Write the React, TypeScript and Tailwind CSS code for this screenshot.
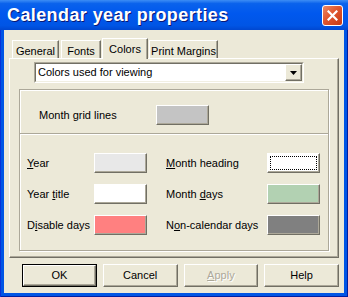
import React from 'react';

const font = { fontFamily: '"Liberation Sans", Arial, sans-serif' };

const raised =
  'border border-t-white border-l-white border-r-[#716F64] border-b-[#716F64] shadow-[inset_-1px_-1px_0_#ACA899]';

function U({ children }: { children: React.ReactNode }) {
  return <span className="underline underline-offset-[1px]">{children}</span>;
}

function Swatch({ color, focus = false }: { color: string; focus?: boolean }) {
  return (
    <div className={`w-[53px] h-[20px] p-[2px] ${raised} ${color}`}>
      {focus && <div className="w-full h-full border border-dotted border-black" />}
    </div>
  );
}

function Tab({ label, active = false, w }: { label: string; active?: boolean; w: string }) {
  if (active) {
    return (
      <div
        className={`${w} h-[21px] -mx-[1px] relative z-10 -mb-[1px] bg-[#ECE9D8] border border-b-0 border-t-white border-l-white border-r-[#716F64] shadow-[inset_-1px_0_0_#ACA899] flex justify-center pt-[2px] text-[11px] text-black`}
      >
        {label}
      </div>
    );
  }
  return (
    <div
      className={`${w} h-[18px] bg-[#ECE9D8] border border-b-0 border-t-white border-l-white border-r-[#716F64] shadow-[inset_-1px_0_0_#ACA899] flex justify-center pt-[2px] text-[11px] text-black`}
    >
      {label}
    </div>
  );
}

function DlgButton({ children, primary = false, disabled = false }: { children: React.ReactNode; primary?: boolean; disabled?: boolean }) {
  return (
    <div className={`w-[75px] h-[23px] ${primary ? 'border border-black' : ''}`}>
      <div
        className={`w-full h-full ${raised} bg-[#ECE9D8] flex items-center justify-center text-[11px] ${
          disabled ? 'text-[#ACA899] [text-shadow:1px_1px_0_#fff]' : 'text-black'
        }`}
      >
        {children}
      </div>
    </div>
  );
}

export default function App() {
  return (
    <div
      className="w-[348px] h-[297px] flex flex-col bg-[#0055E5] shadow-[inset_1px_0_0_#0831D9,inset_-1px_0_0_#001EA0,inset_0_-1px_0_#001EA0]"
      style={font}
    >
      {/* title bar */}
      <div className="h-[30px] shrink-0 flex items-center justify-between pl-[7px] pr-[5px] bg-[linear-gradient(to_bottom,#3D8DF5_0%,#0A62EC_12%,#0058EE_45%,#0055E5_85%,#0047D0_100%)]">
        <span className="text-white font-bold text-[18px] tracking-[0.4px] [text-shadow:1px_1px_0_#0A1874]">
          Calendar year properties
        </span>
        <div className="w-[21px] h-[21px] rounded-[3px] border border-white bg-[linear-gradient(135deg,#EB8A66_0%,#E0562F_45%,#C63A14_100%)] flex items-center justify-center">
          <svg width="11" height="11" viewBox="0 0 11 11">
            <path d="M1.5 1.5 L9.5 9.5 M9.5 1.5 L1.5 9.5" stroke="white" strokeWidth="2.2" strokeLinecap="square" />
          </svg>
        </div>
      </div>

      {/* client */}
      <div className="flex-1 mx-[4px] mb-[4px] bg-[#ECE9D8] px-[5px] pt-[7px] flex flex-col">
        <div className="h-[21px] flex items-end pl-[3px] gap-[2px]">
          <Tab label="General" w="w-[47px]" />
          <Tab label="Fonts" w="w-[40px]" />
          <Tab label="Colors" w="w-[46px]" active />
          <Tab label="Print Margins" w="w-[69px]" />
        </div>

        {/* tab panel */}
        <div className="h-[200px] shrink-0 border border-t-white border-l-white border-r-[#716F64] border-b-[#716F64] shadow-[inset_-1px_-1px_0_#ACA899] flex flex-col">
          <div className="pl-[24px] pt-[3px]">
            <div className="w-[270px] h-[21px] border border-t-[#ACA899] border-l-[#ACA899] border-r-white border-b-white">
              <div className="w-full h-full border border-t-[#716F64] border-l-[#716F64] border-r-[#F1EFE2] border-b-[#F1EFE2] bg-white flex items-center">
                <span className="flex-1 pl-[2px] text-[11px] text-black">Colors used for viewing</span>
                <div className={`w-[17px] h-[17px] ${raised} bg-[#ECE9D8] flex items-center justify-center`}>
                  <svg width="7" height="4" viewBox="0 0 7 4">
                    <path d="M0 0 H7 L3.5 4 Z" fill="black" />
                  </svg>
                </div>
              </div>
            </div>
          </div>

          {/* group box */}
          <div className="ml-[9px] mt-[6px] w-[310px] h-[162px] border border-[#ACA899] shadow-[inset_1px_1px_0_#fff,1px_1px_0_#fff] flex flex-col">
            <div className="h-[43px] flex items-start pl-[19px] pt-[15px] text-[11px] text-black">
              <span className="w-[117px] leading-[20px]">
                Month <U>g</U>rid lines
              </span>
              <Swatch color="bg-[#C4C4C4]" />
            </div>
            <div className="h-[2px] border-t border-[#ACA899] shadow-[inset_0_1px_0_#fff]" />
            <div className="flex flex-col gap-[11px] pt-[18px] pl-[7px] text-[11px] text-black">
              <div className="flex items-center h-[20px]">
                <span className="w-[67px]"><U>Y</U>ear</span>
                <Swatch color="bg-[#E8E8E8]" />
                <span className="w-[120px] pl-[19px]"><U>M</U>onth heading</span>
                <Swatch color="bg-white" focus />
              </div>
              <div className="flex items-center h-[20px]">
                <span className="w-[67px]">Year <U>t</U>itle</span>
                <Swatch color="bg-white" />
                <span className="w-[120px] pl-[19px]">Month <U>d</U>ays</span>
                <Swatch color="bg-[#B2D1B2]" />
              </div>
              <div className="flex items-center h-[20px]">
                <span className="w-[67px]">D<U>i</U>sable days</span>
                <Swatch color="bg-[#FF8080]" />
                <span className="w-[120px] pl-[19px]">N<U>o</U>n-calendar days</span>
                <Swatch color="bg-[#808080]" />
              </div>
            </div>
          </div>
        </div>

        {/* buttons */}
        <div className="flex pl-[13px] pt-[6px] gap-[6px]">
          <DlgButton primary>OK</DlgButton>
          <DlgButton>Cancel</DlgButton>
          <DlgButton disabled><U>A</U>pply</DlgButton>
          <DlgButton>Help</DlgButton>
        </div>
      </div>
    </div>
  );
}
